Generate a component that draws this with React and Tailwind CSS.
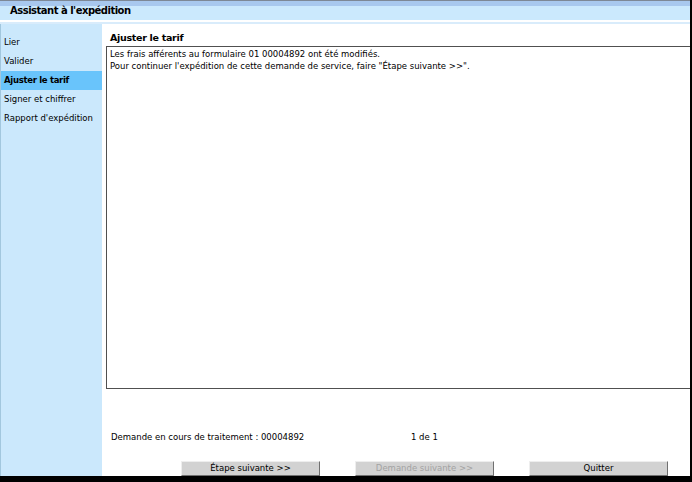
export default function App() {
  const font = { fontFamily: '"DejaVu Sans", Verdana, sans-serif' };
  const items = ["Lier", "Valider", "Ajuster le tarif", "Signer et chiffrer", "Rapport d'expédition"];
  return (
    <div
      className="w-[692px] h-[482px] flex flex-col bg-white border-r-2 border-b-[6px] border-black text-black overflow-hidden"
      style={font}
    >
      <div className="h-px bg-[#7d8896]" />
      <div className="h-[19px] flex items-center pl-[10px] bg-[linear-gradient(to_bottom,#a8c8ee_0px,#a8c8ee_5px,#cbe9fd_5px)]">
        <span className="text-[10px] font-bold tracking-[-0.5px] leading-none">Assistant à l'expédition</span>
      </div>
      <div className="h-[2px] bg-white" />
      <div className="h-[2px] bg-[#d9ecfb]" />
      <div className="flex-1 flex min-h-0">
        <div className="w-[102px] bg-[#cbe8fc] border-l border-[#a2c7de] pt-[9px] flex flex-col">
          {items.map((it, i) => (
            <div
              key={it}
              className={
                "h-[19px] flex items-center pl-[3px] text-[8.5px] leading-none whitespace-nowrap " +
                (i === 2 ? "bg-[#69c4fb] font-bold tracking-[-0.3px]" : "")
              }
            >
              {it}
            </div>
          ))}
        </div>
        <div className="flex-1 flex flex-col pl-[4px]">
          <div className="pt-[7px] h-[22px] pl-[4px] flex items-start">
            <span className="text-[9.5px] font-bold tracking-[-0.3px] leading-[14px]">Ajuster le tarif</span>
          </div>
          <div className="h-[343px] border border-r-0 border-[#505050] pt-[1px] pl-[3px] text-[8.5px] leading-[12px] whitespace-nowrap">
            <div>Les frais afférents au formulaire 01 00004892 ont été modifiés.</div>
            <div>Pour continuer l'expédition de cette demande de service, faire "Étape suivante &gt;&gt;".</div>
          </div>
          <div className="flex-1 flex flex-col">
            <div className="mt-[42px] h-[12px] flex items-center pl-[5px] text-[8.5px] leading-none whitespace-nowrap">
              <span className="w-[300px]">Demande en cours de traitement : 00004892</span>
              <span>1 de 1</span>
            </div>
            <div className="mt-[18px] flex pl-[75px] gap-[35px]">
              <button className="w-[139px] h-[15px] bg-[#d2d2d2] border border-t-[#eeeeee] border-l-[#eeeeee] border-r-[#707070] border-b-[#707070] text-[8.5px] leading-none flex items-center justify-center">
                Étape suivante &gt;&gt;
              </button>
              <button className="w-[139px] h-[15px] bg-[#d2d2d2] border border-t-[#eeeeee] border-l-[#eeeeee] border-r-[#707070] border-b-[#707070] text-[8.5px] leading-none flex items-center justify-center text-[#a3a3a3]">
                Demande suivante &gt;&gt;
              </button>
              <button className="w-[139px] h-[15px] bg-[#d2d2d2] border border-t-[#eeeeee] border-l-[#eeeeee] border-r-[#707070] border-b-[#707070] text-[8.5px] leading-none flex items-center justify-center">
                Quitter
              </button>
            </div>
          </div>
        </div>
      </div>
    </div>
  );
}
